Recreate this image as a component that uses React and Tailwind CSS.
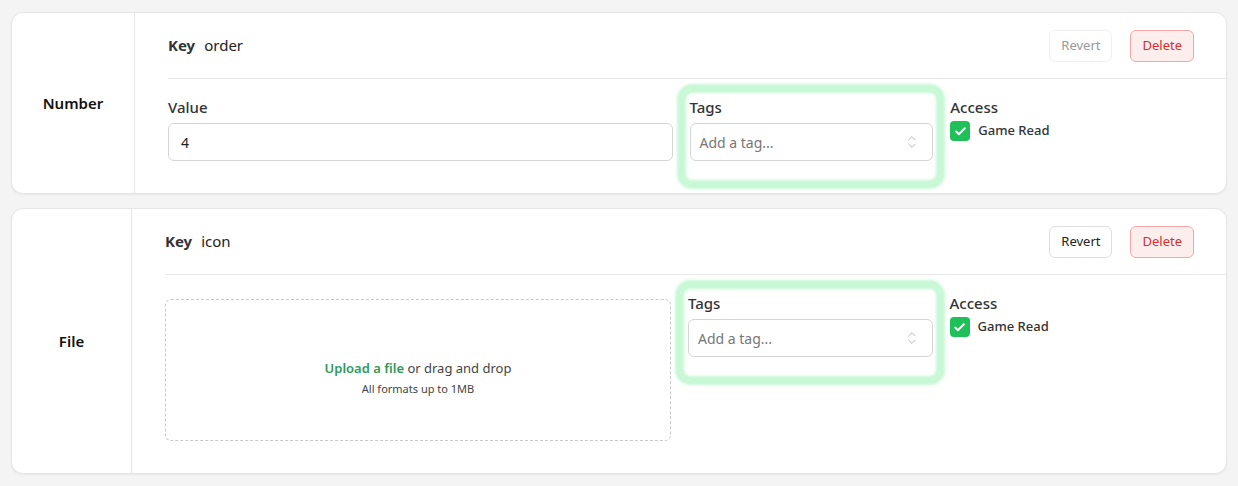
import React from "react";
import { ChevronsUpDown, Check } from "lucide-react";

const font = { fontFamily: '"Noto Sans", "Open Sans", sans-serif' };

function Glow() {
  return (
    <div className="pointer-events-none absolute -left-[8px] -right-[7px] -top-[8px] -bottom-[23px] rounded-[10px] shadow-[0_0_3px_5px_#c6f8d4,inset_0_0_3px_4px_#c6f8d4]" />
  );
}

function Tags() {
  return (
    <div className="relative self-start">
      <Glow />
      <div className="text-[15px] font-medium leading-5 text-[#333]">Tags</div>
      <div className="mt-[6px] flex h-[38px] items-center justify-between rounded-md border border-[#d4d4d4] bg-white pl-[9px] pr-[12px]">
        <span className="text-[14px] text-[#777]">Add a tag...</span>
        <ChevronsUpDown size={16} strokeWidth={1.25} className="text-[#aaa]" />
      </div>
    </div>
  );
}

function Access() {
  return (
    <div className="self-start">
      <div className="text-[15px] font-medium leading-5 text-[#333]">Access</div>
      <div className="mt-[4px] flex items-center gap-2">
        <div className="flex h-5 w-5 items-center justify-center rounded-[4px] bg-[#1fbf5a]">
          <Check size={13} strokeWidth={3.5} className="text-white" />
        </div>
        <span className="text-[13px] font-medium text-[#333]">Game Read</span>
      </div>
    </div>
  );
}

function Header({ k, disabled }) {
  return (
    <div className="flex h-[66px] items-center justify-between border-b border-[#e8e8e8] pr-[32px]">
      <div className="flex items-baseline gap-[9px] text-[15px] text-[#222]">
        <span className="font-bold text-[#333]">Key</span>
        <span>{k}</span>
      </div>
      <div className="flex items-center gap-[18px]">
        <button
          className={
            disabled
              ? "h-8 rounded-md border border-[#f0f0f0] bg-white px-[11px] text-[13px] text-[#999]"
              : "h-8 rounded-md border border-[#dedede] bg-white px-[11px] text-[13px] text-[#222]"
          }
        >
          Revert
        </button>
        <button className="h-8 rounded-md border border-[#f4a5a5] bg-[#fdeeee] px-[11px] text-[13px] text-[#d32f2f]">
          Delete
        </button>
      </div>
    </div>
  );
}

function Card({ type, leftW, padL, k, disabled, children }) {
  return (
    <div className="flex overflow-hidden rounded-xl border border-[#e6e6e6] bg-white shadow-[0_1px_2px_rgba(0,0,0,0.06)]">
      <div
        className="flex shrink-0 items-center justify-center border-r border-[#e6e6e6] text-[15px] font-semibold text-[#111]"
        style={{ width: leftW }}
      >
        {type}
      </div>
      <div className="flex-1" style={{ paddingLeft: padL }}>
        <Header k={k} disabled={disabled} />
        <div className="grid grid-cols-4 gap-x-[17px] pb-[32px] pr-[32px] pt-[18px]">{children}</div>
      </div>
    </div>
  );
}

export default function App() {
  return (
    <div className="min-h-screen bg-[#f4f4f4] px-[11px] pt-[12px] pb-[11px]" style={font}>
      <div className="flex flex-col gap-[14px]">
        <Card type="Number" leftW={123} padL={33} k="order" disabled>
          <div className="col-span-2">
            <div className="text-[15px] font-medium leading-5 text-[#333]">Value</div>
            <div className="mt-[6px] flex h-[38px] items-center rounded-md border border-[#d4d4d4] bg-white px-3 text-[14px] text-[#222]">
              4
            </div>
          </div>
          <Tags />
          <Access />
        </Card>
        <Card type="File" leftW={120} padL={33} k="icon">
          <div className="col-span-2 mt-[6px] flex h-[142px] flex-col items-center justify-center rounded-md border border-dashed border-[#c8c8c8] pt-[16px]">
            <div className="text-[13px] text-[#444]">
              <span className="font-semibold text-[#2e9a58]">Upload a file</span> or drag and drop
            </div>
            <div className="mt-[3px] text-[11px] text-[#444]">All formats up to 1MB</div>
          </div>
          <Tags />
          <Access />
        </Card>
      </div>
    </div>
  );
}
